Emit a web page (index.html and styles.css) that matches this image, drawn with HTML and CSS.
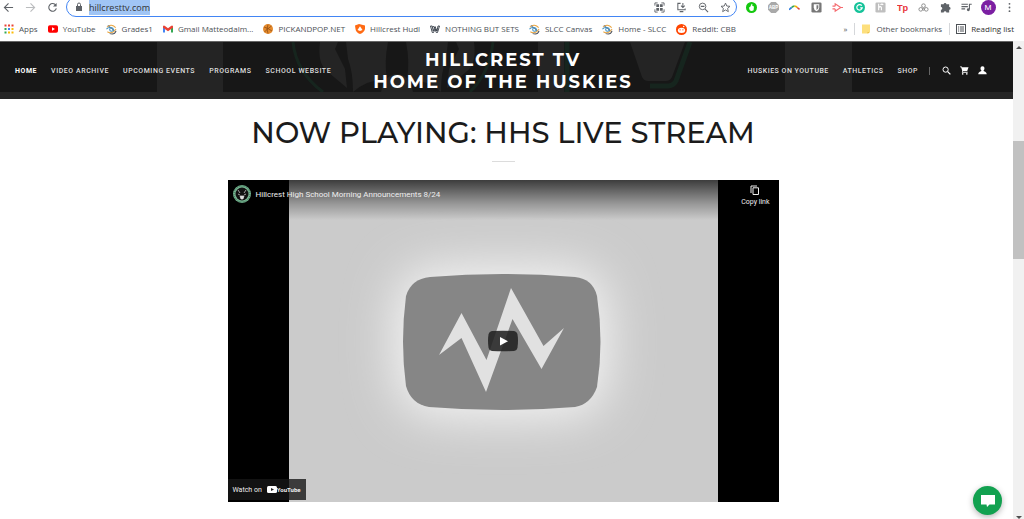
FILE: index.html
```html
<!DOCTYPE html>
<html lang="en">
<head>
<meta charset="utf-8">
<title>Hillcrest TV</title>
<link rel="stylesheet" href="styles.css">
</head>
<body>
<svg class="defs" aria-hidden="true">
  <symbol id="slcc" viewBox="0 0 12 12"><g fill="none" stroke-width="1.1"><path d="M1 3.500C4 0 8 1 10.500 4" stroke="#e8a33d"/><path d="M.500 5.500c3-3 6-2 8 2" stroke="#3b8fc4"/><path d="M1.500 8.500c3 2 7 1 9.500-3" stroke="#e8a33d"/><path d="M4 10.500c3 1 6 0 7-3" stroke="#4a4f58"/><path d="M2 1.500l7 5.500" stroke="#7a8794"/><circle cx="6" cy="6" r="2" stroke="#3b8fc4"/></g></symbol>
</svg>
<div class="toolbar">
  <div class="nav-buttons">
    <button aria-label="Back"><svg viewBox="0 0 12 12"><path d="M11 6H2M6 1.500L1.500 6L6 10.500" fill="none" stroke="#5f6368" stroke-width="1.200"/></svg></button>
    <button aria-label="Forward"><svg viewBox="0 0 12 12"><path d="M1 6h9M6 1.500L10.500 6L6 10.500" fill="none" stroke="#babcbe" stroke-width="1.200"/></svg></button>
    <button aria-label="Reload"><svg viewBox="0 0 12 12"><path d="M9.600 3.500A4.200 4.200 0 1 0 10.200 7" fill="none" stroke="#5f6368" stroke-width="1.200"/><path d="M10.500 1v4h-4z" fill="#5f6368"/></svg></button>
  </div>
  <div class="omnibox">
    <svg viewBox="0 0 10 10"><path d="M2 4h6v5H2z" fill="#5f6368"/><path d="M3.500 4V2.500a1.500 1.500 0 0 1 3 0V4" fill="none" stroke="#5f6368"/></svg>
    <a class="url" href="#">hillcresttv.com</a>
    <div class="omni-actions">
      <button aria-label="QR code"><svg viewBox="0 0 12 12"><path d="M1 4V1h3M8 1h3v3M11 8v3H8M4 11H1V8" fill="none" stroke="#5f6368"/><path d="M2.500 2.500h3v3h-3zM6.500 2.500h3v3h-3zM2.500 6.500h3v3h-3zM6.500 6.500h3v3h-3z" fill="#5f6368"/></svg></button>
      <button aria-label="Install"><svg viewBox="0 0 12 12"><path d="M5 1.500H2v7h8V7M4 10.500h4M7.500 1v4.500M5.500 4l2 2l2-2" fill="none" stroke="#5f6368" stroke-width="1.100"/></svg></button>
      <button aria-label="Zoom"><svg viewBox="0 0 12 12"><path d="M7.800 7.800L11 11M3 4.800h4" fill="none" stroke="#5f6368" stroke-width="1.200"/><circle cx="5" cy="4.800" r="3.600" fill="none" stroke="#5f6368"/></svg></button>
      <button aria-label="Bookmark this page"><svg viewBox="0 0 12 12"><path d="M6 1.200l1.400 3.200 3.500.3-2.600 2.300.8 3.500L6 8.700l-3.100 1.800.8-3.500L1.100 4.700l3.500-.3z" fill="none" stroke="#5f6368"/></svg></button>
    </div>
  </div>
  <div class="extensions">
    <button aria-label="Thumbs up"><svg viewBox="0 0 12 12"><circle cx="6" cy="6" r="6" fill="#14c80f"/><path d="M3.200 6l1.300-.5L6.200 2c.9 0 .9 1 .6 2.200l1.900.6L8.300 9Q6 10.500 4 9z" fill="#fff"/></svg></button>
    <button aria-label="Ad block"><svg viewBox="0 0 12 12"><path d="M3.500 0h5L12 3.500v5L8.500 12h-5L0 8.500v-5z" fill="#a9a9a9"/><text x="6" y="8" class="tiny">ABP</text></svg></button>
    <button aria-label="Arc"><svg viewBox="0 0 12 12"><g fill="none" stroke-width="1.700"><path d="M0 8.500Q1.500 7 3 6" stroke="#2f7de0"/><path d="M3 6Q4 4.500 6 4.500" stroke="#37a853"/><path d="M6 4.500Q8 4.500 9 6" stroke="#f4b400"/><path d="M9 6l2.500 2" stroke="#db4437"/></g></svg></button>
    <button aria-label="Shield"><svg viewBox="0 0 12 12"><rect x=".5" y=".5" width="11" height="11" rx="1.500" fill="#777"/><path d="M3 2.500h6V6Q9 8.500 6 10Q3 8.500 3 6z" fill="#fff"/><path d="M6 3.500h2V6Q8 7.500 6 8.700z" fill="#777"/></svg></button>
    <button aria-label="Player"><svg viewBox="0 0 12 12"><path d="M3.500 4.500V2l6 4-6 4V7.500M.5 4.500h3M.5 7.500h3M9 6h3" fill="none" stroke="#f56a6f" stroke-width="1.300"/></svg></button>
    <button aria-label="Grammar"><svg viewBox="0 0 12 12"><circle cx="6" cy="6" r="6" fill="#15c39a"/><path d="M8.500 4A3 3 0 1 0 9 6.500H6.800" fill="none" stroke="#fff" stroke-width="1.300"/></svg></button>
    <button aria-label="Honey"><svg viewBox="0 0 12 12"><rect x=".5" y=".5" width="11" height="11" rx="1.500" fill="#bfbfbf"/><path d="M4 2v7M4 6q2-2 3 0v3M6 3q1.500-1.500 3 0" fill="none" stroke="#fff" stroke-width="1.200"/></svg></button>
    <button aria-label="Tp"><svg viewBox="0 0 12 12"><text x="6" y="9.500" class="tp">Tp</text></svg></button>
    <button aria-label="Rings"><svg viewBox="0 0 12 12"><g fill="none" stroke="#888"><circle cx="6" cy="4" r="2"/><circle cx="3" cy="8" r="2"/><circle cx="9" cy="8" r="2"/><circle cx="6" cy="8" r="1"/></g></svg></button>
    <button aria-label="Extensions"><svg viewBox="0 0 12 12"><path d="M1 2.500H4a1.500 1.500 0 0 1 3 0h3v3a1.500 1.500 0 0 1 0 3V11.500H7a1.500 1.500 0 0 0-3 0H1V8.500a1.500 1.500 0 0 0 0-3z" fill="#5f6368"/></svg></button>
    <button aria-label="Media"><svg viewBox="0 0 12 12"><path d="M.5 2.500h7M.5 5h7M.5 7.500h4M9.200 8V2.500h2.500" fill="none" stroke="#5f6368" stroke-width="1.200"/><circle cx="8" cy="8.500" r="1.600" fill="#5f6368"/></svg></button>
    <button class="avatar" aria-label="Profile">M</button>
    <button aria-label="Menu"><svg viewBox="0 0 12 12"><g fill="#5f6368"><circle cx="6" cy="2" r="1"/><circle cx="6" cy="6" r="1"/><circle cx="6" cy="10" r="1"/></g></svg></button>
  </div>
</div>
<nav class="bookmarks" aria-label="Bookmarks">
  <a href="#"><svg viewBox="0 0 10 10"><g fill="#ea4335"><path d="M.5.500h2v2h-2zM4 .500h2v2H4zM7.500.500h2v2h-2z"/></g><path d="M.5 4h2v2h-2zM.500 7.500h2v2h-2z" fill="#34a853"/><path d="M4 4h2v2H4z" fill="#4285f4"/><path d="M7.500 4h2v2h-2zM4 7.500h2v2H4zM7.500 7.500h2v2h-2z" fill="#fbbc05"/></svg>Apps</a>
  <a href="#"><svg viewBox="0 0 10 10"><rect y="1.300" width="10" height="7.400" rx="1.800" fill="#f00"/><path d="M4 3.300L7 5L4 6.700z" fill="#fff"/></svg>YouTube</a>
  <a href="#"><svg class="wide" viewBox="0 0 12 12"><use href="#slcc"/></svg>Grades1</a>
  <a href="#"><svg viewBox="0 0 10 10"><path d="M0 2v6.500h2V4z" fill="#4285f4"/><path d="M10 2v6.500H8V4z" fill="#34a853"/><path d="M0 2.500Q.500 1 2 2l3 2.300L8 2q1.500-1 2 .500v1.200L5 7.300L0 3.700z" fill="#ea4335"/></svg>Gmail Matteodalm...</a>
  <a href="#"><svg viewBox="0 0 10 10"><circle cx="5" cy="5" r="5" fill="#e58a2c"/><path d="M1 3q4 1 8 4M5 .500Q3 5 5 9.500M1.500 8Q4 5 8.500 2" fill="none" stroke="#8a4a12" stroke-width=".7"/></svg>PICKANDPOP.NET</a>
  <a href="#"><svg viewBox="0 0 10 10"><path d="M0 1.500L4 0l6 1.500V5Q9 8.500 5 10Q1 8.500 .500 5z" fill="#ff6a13"/><path d="M5 2.300L7.500 6L5 7L2.500 6z" fill="#fff"/></svg>Hillcrest Hudl</a>
  <a href="#"><svg viewBox="0 0 10 10"><path d="M.500 2h1.700l1 5L5 2.500L7 7l1-5h1.500L7.500 8.500H6.300L5 5L3.500 8.500H2.300zM3 2l4 5" fill="none" stroke="#333b45" stroke-width=".9"/></svg>NOTHING BUT SETS</a>
  <a href="#"><svg class="wide" viewBox="0 0 12 12"><use href="#slcc"/></svg>SLCC Canvas</a>
  <a href="#"><svg class="wide" viewBox="0 0 12 12"><use href="#slcc"/></svg>Home - SLCC</a>
  <a href="#"><svg class="wide" viewBox="0 0 10 10"><circle cx="5" cy="5" r="5" fill="#ff4500"/><ellipse cx="5" cy="5.800" rx="3.300" ry="2.300" fill="#fff"/><circle cx="7" cy="2.300" r=".7" fill="#fff"/><circle cx="3.700" cy="5.300" r=".6" fill="#ff4500"/><circle cx="6.300" cy="5.300" r=".6" fill="#ff4500"/></svg>Reddit: CBB</a>
  <button class="more" aria-label="More bookmarks">»</button>
  <a class="ruled" href="#"><svg viewBox="0 0 10 10"><path d="M1 .500h8v7L7.500 9.500H1z" fill="#fddf7c"/><path d="M6.500 9.500V8H9" fill="#e9bd43"/></svg>Other bookmarks</a>
  <a class="ruled dark" href="#"><svg viewBox="0 0 10 10"><rect x=".5" y=".5" width="9" height="9" fill="none" stroke="#4d5156"/><path d="M2 3h1.200M4 3h4M2 5h1.200M4 5h4M2 7h1.200M4 7h4" stroke="#4d5156"/></svg>Reading list</a>
</nav>
<div class="viewport">
  <div class="page">
    <header class="site-header">
      <svg class="backdrop" viewBox="0 0 1013 58" preserveAspectRatio="xMidYMin slice" aria-hidden="true">
        <path d="M0 0h1013v58H0z" fill="#171717"/>
        <path d="M157 0h66v58h-66zM785 0h67v58h-67z" fill="#242424"/>
        <g fill="none" stroke="#16251e">
          <path d="M293 0Q296 30 323 50M493 0Q490 30 470 50" stroke-width="3"/>
          <path d="M567 0v50M690 0l-14 39q-3 5-8 5h-18" stroke-width="5"/>
        </g>
        <g fill="#242424">
          <path d="M320 0Q317 22 328 30L347 46L345 27L335 7L338 0z"/>
          <path d="M346 0H388Q384 20 387 37Q366 38 353 50Q353 30 348 17z"/>
          <path d="M474 0Q477 22 466 30L447 46L449 27L459 7L456 0z"/>
          <path d="M406 0H448L446 17Q441 30 441 50Q428 38 407 37Q410 20 406 0z"/>
          <path d="M381 50Q385 32 397 32Q409 32 413 50z"/>
          <path d="M538 0h26v50h-26z"/>
          <path d="M630 0h55l-13 35q-2 4-6 4h-18q-4 0-6-4z"/>
        </g>
        <path d="M0 50h1013v8H0z" fill="#262626"/>
      </svg>
      <nav class="site-nav start" aria-label="Main">
        <a class="current" href="#">HOME</a><a href="#">VIDEO ARCHIVE</a><a href="#">UPCOMING EVENTS</a><a href="#">PROGRAMS</a><a href="#">SCHOOL WEBSITE</a>
      </nav>
      <a class="brand" href="#">HILLCREST TV<br>HOME OF THE HUSKIES</a>
      <nav class="site-nav end" aria-label="More">
        <a href="#">HUSKIES ON YOUTUBE</a><a href="#">ATHLETICS</a><a href="#">SHOP</a>
        <span class="tools">
          <button aria-label="Search"><svg viewBox="0 0 10 10"><circle cx="4" cy="4" r="2.900" fill="none" stroke="#fff" stroke-width="1.100"/><path d="M6.300 6.300L9.300 9.300" stroke="#fff" stroke-width="1.400"/></svg></button>
          <button aria-label="Cart"><svg viewBox="0 0 10 10"><path d="M0 .500h2l.4 1H9.500L8 5.500H3.500L3 6.500h5.500v1H2L2.500 5.500L1.300 1.500H0z" fill="#fff"/><circle cx="3" cy="8.800" r=".9" fill="#fff"/><circle cx="7.600" cy="8.800" r=".9" fill="#fff"/></svg></button>
          <button aria-label="Account"><svg viewBox="0 0 10 10"><path d="M5 .300c3 0 2.500 4 1 5 .500 1 3.700.800 3.700 4H.300C.300 6.100 3.500 6.300 4 5.300 2.500 4.300 2 .300 5 .300z" fill="#fff"/></svg></button>
        </span>
      </nav>
    </header>
    <main>
      <h1>NOW PLAYING: HHS LIVE STREAM</h1>
      <hr>
      <section class="player" aria-label="Video player">
        <svg class="still" viewBox="0 0 429 322" preserveAspectRatio="xMidYMid meet" aria-hidden="true">
          <defs>
            <filter id="glow" x="-50%" y="-50%" width="200%" height="200%"><feGaussianBlur stdDeviation="24"/></filter>
            <path id="screen" d="M141 97Q213 91 286 97Q304 99 308 116Q315 162 308 207Q302 224 286 227Q213 233 140 227Q122 224 117 206Q111 162 117 116Q122 99 141 97z"/>
          </defs>
          <path d="M0 0h429v322H0z" fill="#cbcbcb"/>
          <use href="#screen" fill="#f4f4f4" stroke="#f4f4f4" stroke-width="16" filter="url(#glow)"/>
          <use href="#screen" fill="#868686"/>
          <path d="M150 175L172.500 133L197.500 180L222 108L254.500 166L275 148L252.500 189L223.500 139L197 212L172.500 158z" fill="#e1e1e1"/>
        </svg>
        <div class="player-top">
          <svg class="channel" viewBox="0 0 18 18"><circle cx="9" cy="9" r="9" fill="#78b291"/><circle cx="9" cy="9" r="8" fill="none" stroke="#2b6f4b" stroke-dasharray="1 1"/><circle cx="9" cy="9" r="6.500" fill="#111"/><path d="M5 5l2 3M13 5l-2 3M5 9l2 1M13 9l-2 1M7 11h4l-1 3H8z" fill="#ddd" stroke="#ddd" stroke-width=".7"/></svg>
          <a class="video-title" href="#">Hillcrest High School Morning Announcements 8/24</a>
          <button class="copy"><svg viewBox="0 0 10 10"><path d="M1 8V1h6M3 2.800h5.500V9.500H3z" fill="none" stroke="#eee"/></svg>Copy link</button>
        </div>
        <button class="play" aria-label="Play"><svg viewBox="0 0 30 21"><path d="M4 .5Q15-.5 26 .5Q29 1 29.500 4Q30.500 10 29.500 17Q29 20 26 20.500Q15 21.500 4 20.500Q1 20 .5 17Q-.5 10 .5 4Q1 1 4 .5z" fill="#212121" fill-opacity=".87"/><path d="M12 6.500L20 10.700L12 15z" fill="#fff"/></svg></button>
        <a class="watch" href="#">Watch on <span class="yt"><svg viewBox="0 0 10 7"><rect width="10" height="7" rx="1.500" fill="#fff"/><path d="M4 2L7 3.500L4 5z" fill="#222"/></svg>YouTube</span></a>
      </section>
    </main>
    <button class="chat" aria-label="Chat"><svg viewBox="0 0 14 12"><path d="M0 0h14v9.500H8.500L6 12L5.500 9.500H0z" fill="#fff"/></svg></button>
  </div>
  <div class="scrollbar" aria-hidden="true"><span class="arrow"></span><span class="thumb"></span><span class="arrow down"></span></div>
</div>
</body>
</html>
```

FILE: styles.css
```css
* { box-sizing: border-box; }
body { margin: 0; height: 100vh; overflow: hidden; display: flex; flex-direction: column; background: #fff; font-family: "Roboto", "Liberation Sans", sans-serif; }
a { color: inherit; text-decoration: none; }
button { border: 0; padding: 0; background: none; color: inherit; font: inherit; display: flex; align-items: center; }
svg { display: block; flex: none; }
.defs { position: absolute; width: 0; height: 0; }

.toolbar { height: 17px; flex: none; overflow: hidden; display: flex; align-items: flex-end; padding: 0 9px 0 3px; }
.toolbar > div { height: 20px; display: flex; align-items: center; flex: none; }
.toolbar svg { width: 11px; height: 11px; }
.nav-buttons { gap: 11px; width: 63px; }
.toolbar .omnibox { flex: 1; border: 1px solid #4285f4; border-radius: 10px; padding: 0 5px 0 7px; gap: 5px; font: 9px/15px "Open Sans", sans-serif; color: #333; }
.omnibox > svg { width: 10px; height: 10px; }
.url { background: #a0c5f5; margin-right: auto; }
.omni-actions { display: flex; gap: 11px; }
.toolbar .extensions { flex: 0 0 278px; justify-content: space-between; padding-left: 9px; }
.extensions .avatar { width: 15px; height: 15px; border-radius: 50%; background: #7b1fa2; color: #fff; font-size: 8px; justify-content: center; margin: 0 -2px; }
.tiny { font: 700 5px "Liberation Sans", sans-serif; fill: #fff; text-anchor: middle; }
.tp { font: 700 10px "Liberation Sans", sans-serif; fill: #e8333a; text-anchor: middle; }

.bookmarks { height: 24px; flex: none; display: flex; align-items: center; gap: 10px; padding: 0 10px 0 4px; font: 8px/12px "Open Sans", sans-serif; color: #4d5156; white-space: nowrap; }
.bookmarks a { display: flex; align-items: center; gap: 5px; }
.bookmarks svg { width: 10px; height: 10px; }
.bookmarks .wide { width: 11px; height: 11px; }
.more { margin-left: auto; }
.bookmarks .ruled { border-left: 1px solid #d5d7da; padding-left: 6px; margin-left: -3px; }
.bookmarks .ruled.dark { color: #333; }

.viewport { flex: 1; min-height: 0; display: flex; }
.page { flex: 1; min-width: 0; position: relative; overflow: hidden; }
.site-header { position: relative; height: 58px; display: grid; grid-template-columns: 1fr auto 1fr; align-items: center; padding: 0 26px 0 15px; color: #fff; background: #171717; border-top: 1px solid #666; }
.backdrop { position: absolute; inset: 0; width: 100%; height: 100%; }
.site-nav, .brand { position: relative; }
.site-nav { display: flex; align-items: center; gap: 14px; font-size: 7px; line-height: 10px; font-weight: 500; letter-spacing: .07em; color: #dedede; white-space: nowrap; }
.start { letter-spacing: .08em; }
.site-nav .current { font-weight: 700; color: #fff; }
.end { justify-content: flex-end; }
.tools { display: flex; gap: 9px; padding-left: 12px; margin-left: -3px; border-left: 1px solid #666; height: 8px; align-items: center; }
.tools svg { width: 9px; height: 9px; }
.brand { font: 700 18px/22px "Montserrat", "Inter", sans-serif; letter-spacing: 2px; text-align: center; padding-left: 4px; }

main { padding: 16px 27px 0 20px; display: flex; flex-direction: column; align-items: center; }
h1 { margin: 0; font: 500 29px/36px "Montserrat", "Inter", sans-serif; color: #1b1b1b; text-align: center; }
hr { width: 23px; margin: 10px 0 18px; border: 0; border-top: 1px solid #dcdcdc; }
.player { position: relative; width: 100%; max-width: 551px; aspect-ratio: 551 / 322; background: #000; color: #eee; }
.player .still { width: 100%; height: 100%; }
.player-top { position: absolute; inset: 0 0 auto; height: 40px; padding: 5px 9px 0 5px; display: flex; align-items: flex-start; gap: 5px; background: linear-gradient(rgba(0,0,0,.7), rgba(0,0,0,.25) 60%, rgba(0,0,0,0)); }
.channel { width: 18px; height: 18px; }
.video-title { font-size: 8px; line-height: 19px; margin-right: auto; }
.copy { flex-direction: column; gap: 3px; font-size: 7px; line-height: 9px; }
.copy svg { width: 10px; height: 10px; }
.play { position: absolute; left: 50%; top: 50%; transform: translate(-50%, -50%); }
.play svg { width: 30px; height: 21px; }
.watch { position: absolute; left: 0; bottom: 2px; height: 21px; padding: 0 5px; display: flex; align-items: center; gap: 5px; background: rgba(23,23,23,.8); font-size: 7px; }
.yt { display: flex; align-items: center; font-weight: 700; font-size: 6px; }
.yt svg { width: 10px; height: 7px; }
.chat { position: absolute; right: 11px; bottom: 4px; width: 29px; height: 29px; border-radius: 50%; background: #12a150; justify-content: center; box-shadow: 0 2px 6px rgba(0,0,0,.3); }
.chat svg { width: 14px; height: 12px; }

.scrollbar { width: 11px; background: #f1f1f1; display: flex; flex-direction: column; align-items: center; padding-top: 5px; }
.arrow { border: 3px solid transparent; border-top: 0; border-bottom: 3px solid #505050; }
.thumb { width: 100%; height: 118px; margin: 92px 0 auto; background: #c1c1c1; }
.down { border-bottom: 0; border-top: 3px solid #505050; }
```
